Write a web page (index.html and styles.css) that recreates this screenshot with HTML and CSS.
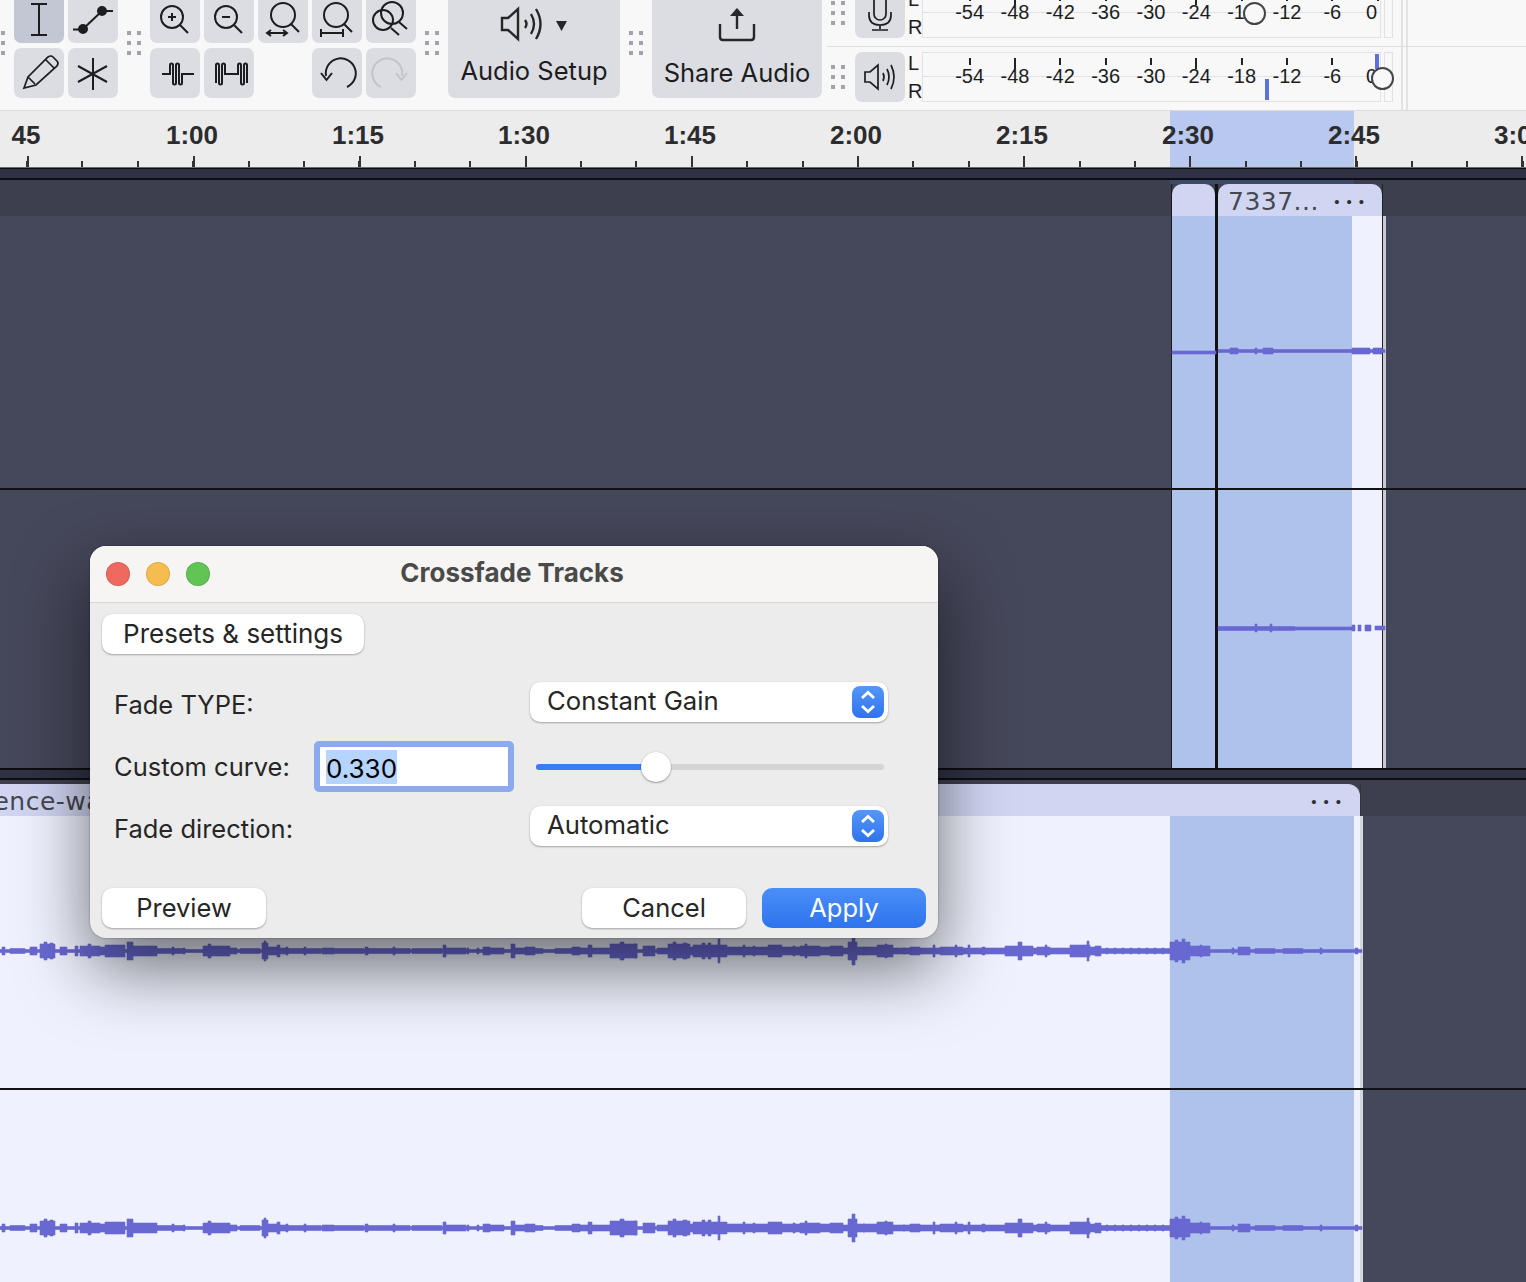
FILE: index.html
```html
<!DOCTYPE html>
<html lang="en">
<head>
<meta charset="utf-8">
<title>Crossfade Tracks</title>
<link rel="stylesheet" href="styles.css">
</head>
<body>
<svg class="defs" width="0" height="0" aria-hidden="true">
  <defs>
    <path id="wave-long" d="M0-1.5H1362V1.5H0ZM10-2.500h15v5h-15zM100-4h5v8h-5zM157-2.500h15v5h-15zM174-2.500h9v5h-9zM230-3h7v6h-7zM240-2.500h20v5h-20zM268-4h9v8h-9zM280-3h6v6h-6zM288-2.500h16v5h-16zM306-2.500h15v5h-15zM322-3h12v6h-12zM334-2.500h30v5h-30zM368-2.500h25v5h-25zM395-2.500h15v5h-15zM412-2.500h30v5h-30zM446-3h20v6h-20zM490-3h12v6h-12zM515-3h10v6h-10zM535-2.500h8v5h-8zM555-2.500h17v5h-17zM580-3h8v6h-8zM592-3h18v6h-18zM690-4h3v8h-3zM740-4h28v8h-28zM782-4h18v8h-18zM820-4h10v8h-10zM843-3h5v6h-5zM857-4h20v8h-20zM893-3h17v6h-17zM928-3h12v6h-12zM963-3h19v6h-19zM985-3h20v6h-20zM1033-3h37v6h-37zM1090-4h5v8h-5zM1101-2.500h69v5h-69zM2-4h3v8h-3zM30-4h7v8h-7zM40-7h15v14h-15zM44-9h3v18h-3zM50-8h3v16h-3zM60-4h7v8h-7zM75-5h3v10h-3zM80-5h20v10h-20zM88-7h3v14h-3zM105-6h20v12h-20zM127-9h6v18h-6zM133-5h24v10h-24zM172-4h2v8h-2zM183-3h2v6h-2zM203-5h27v10h-27zM208-7h3v14h-3zM262-8h6v16h-6zM264-10h2v20h-2zM277-6h3v12h-3zM286-4h2v8h-2zM304-4h2v8h-2zM365-4h3v8h-3zM393-4h2v8h-2zM443-6h3v12h-3zM467-3h2v6h-2zM477-3h2v6h-2zM483-4h7v8h-7zM502-3h2v6h-2zM511-7h4v14h-4zM525-4h10v8h-10zM572-4h8v8h-8zM588-6h4v12h-4zM610-7h27v14h-27zM620-9h4v18h-4zM634-7h3v14h-3zM643-5h12v10h-12zM657-3h11v6h-11zM668-7h22v14h-22zM673-9h3v18h-3zM683-8h4v16h-4zM693-6h34v12h-34zM702-8h3v16h-3zM708-8h3v16h-3zM718-12h2v24h-2zM727-4h13v8h-13zM743-6h2v12h-2zM753-5h2v10h-2zM768-6h14v12h-14zM793-5h2v10h-2zM800-5h20v10h-20zM805-7h2v14h-2zM830-5h13v10h-13zM848-9h9v18h-9zM852-14h3v28h-3zM863-4h2v8h-2zM877-6h16v12h-16zM885-7h2v14h-2zM903-3h2v6h-2zM910-4h10v8h-10zM920-3h8v6h-8zM933-6h2v12h-2zM940-4h23v8h-23zM955-6h2v12h-2zM968-6h2v12h-2zM982-4h3v8h-3zM1005-5h28v10h-28zM1018-9h4v18h-4zM1037-4h13v8h-13zM1045-6h2v12h-2zM1070-6h20v12h-20zM1087-10h2v20h-2zM1095-5h6v10h-6zM1106-3h2v6h-2zM1114-3h2v6h-2zM1122-3h2v6h-2zM1130-3h2v6h-2zM1138-3h2v6h-2zM1146-3h2v6h-2zM1154-3h2v6h-2zM1162-3h2v6h-2zM1170-9h20v18h-20zM1175-11h3v22h-3zM1182-12h3v24h-3zM1190-5h20v10h-20zM1200-6h2v12h-2zM1232-3h2v6h-2zM1238-4h12v8h-12zM1255-2.500h20v5h-20zM1283-2.500h20v5h-20zM1320-3h2v6h-2zM1355-3h3v6h-3z"/>
  </defs>
</svg>
<div class="app">
  <header class="toolbar">
    <span class="grip"></span>
    <div class="tool-grid tool-grid-2">
      <button class="tool active"><svg viewBox="0 0 50 50"><path d="M17 11h16M25 11v31M17 42h16"/></svg></button>
      <button class="tool"><svg viewBox="0 0 50 50"><path d="M15 36L34 18M5 36.500H15M34 18H45"/><circle class="solid" cx="15" cy="36" r="4"/><circle class="solid" cx="34" cy="18" r="4"/></svg></button>
      <button class="tool"><svg class="thin" viewBox="0 0 50 50"><path d="M10 40L14 29L34 9Q37 7 39 9L43 13Q45 15 43 18L22 37ZM14 29L21 36M32 12L40 20"/></svg></button>
      <button class="tool"><svg viewBox="0 0 50 50"><path d="M25 10V42M10 18L39 34M10 34L39 18"/></svg></button>
    </div>
    <span class="grip"></span>
    <div class="tool-grid tool-grid-5">
      <button class="tool"><svg viewBox="0 0 50 50"><circle cx="22" cy="24" r="11"/><path d="M18 24h8M22 20v8M30 32L38 40"/></svg></button>
      <button class="tool"><svg viewBox="0 0 50 50"><circle cx="22" cy="24" r="11"/><path d="M18 24h8M30 32L38 40"/></svg></button>
      <button class="tool"><svg viewBox="0 0 50 50"><circle cx="25" cy="22" r="12"/><path d="M33 31L41 39M9 40H29M13 37L9 40L13 43M25 37L29 40L25 43"/></svg></button>
      <button class="tool"><svg viewBox="0 0 50 50"><circle cx="24" cy="22" r="12"/><path d="M32 31L40 39M9 40H31M9 36V44M31 36V44"/></svg></button>
      <button class="tool"><svg viewBox="0 0 50 50"><circle cx="26" cy="20" r="11"/><circle cx="17" cy="27" r="10"/><path d="M33 29L41 36M25 35L33 42"/></svg></button>
      <button class="tool"><svg viewBox="0 0 50 50"><path d="M12 26H20V17a1.500 1.500 0 0 1 3 0V35a1.500 1.500 0 0 0 3 0V17a1.500 1.500 0 0 1 3 0V35a1.500 1.500 0 0 0 3 0V26H44"/></svg></button>
      <button class="tool"><svg viewBox="0 0 50 50"><path d="M12 35V17a1.500 1.500 0 0 1 3 0V35a1.500 1.500 0 0 0 3 0V17a1.500 1.500 0 0 1 3 0V26H34V17a1.500 1.500 0 0 1 3 0V35a1.500 1.500 0 0 0 3 0V17a1.500 1.500 0 0 1 3 0V35"/></svg></button>
      <span class="tool-gap"></span>
      <button class="tool"><svg viewBox="0 0 50 50"><path d="M14 28A15 15 0 1 1 35 39M9 25L14.500 32L20 25"/></svg></button>
      <button class="tool muted"><svg viewBox="0 0 50 50"><path d="M36 28A15 15 0 1 0 15 39M41 25L35.500 32L30 25"/></svg></button>
    </div>
    <span class="grip"></span>
    <button class="wide-btn audio-btn">
      <svg class="wide-icon" width="68" height="36" viewBox="0 0 68 36"><path d="M2 12H8L18 3V33L8 24H2Z"/><path d="M25 14Q28 18 25 22M31 8Q37 18 31 28M36 3Q45 18 36 33"/><path class="solid" d="M56 15H67L61.500 25Z"/></svg>
      <span class="wide-label">Audio Setup</span>
    </button>
    <span class="grip"></span>
    <button class="wide-btn share-btn">
      <svg class="wide-icon" width="40" height="36" viewBox="0 0 40 36"><path d="M3 18V31Q3 34 6 34H34Q37 34 37 31V18M20 3V23"/><path class="solid" d="M13 10L20 2L27 10Z"/></svg>
      <span class="wide-label">Share Audio</span>
    </button>
    <div class="meters">
      <div class="meter-row meter-row-rec">
        <span class="grip grip-row"></span>
        <button class="tool"><svg class="thin" viewBox="0 0 50 50"><rect x="19" y="5" width="12" height="27" rx="6"/><path d="M14 24V27Q14 37 25 37Q36 37 36 27V24M25 37V41M17 42H33"/></svg></button>
        <div class="channels"><span>L</span><span>R</span></div>
        <div class="meter-box">
          <span class="cell">-54</span><span class="cell major">-48</span><span class="cell">-42</span><span class="cell">-36</span><span class="cell">-30</span><span class="cell major">-24</span><span class="cell">-18</span><span class="cell">-12</span><span class="cell">-6</span><span class="cell cell-end">0</span>
          <span class="knob knob-rec"></span>
        </div>
        <span class="peak"></span>
        <span class="meter-rules"></span>
      </div>
      <div class="meter-row meter-row-play">
        <span class="grip grip-row"></span>
        <button class="tool"><svg class="thin" viewBox="0 0 50 50"><path d="M10 20H15L23 13V37L15 30H10Z"/><path d="M28 21Q30 25 28 29M32 17Q36 25 32 33M36 13Q42 25 36 37"/></svg></button>
        <div class="channels"><span>L</span><span>R</span></div>
        <div class="meter-box">
          <span class="cell">-54</span><span class="cell major">-48</span><span class="cell">-42</span><span class="cell">-36</span><span class="cell">-30</span><span class="cell major">-24</span><span class="cell">-18</span><span class="cell">-12</span><span class="cell">-6</span><span class="cell cell-end">0</span>
          <span class="level level-l"></span>
          <span class="level level-r"></span>
          <span class="knob knob-play"></span>
        </div>
        <span class="peak"></span>
        <span class="meter-rules"></span>
      </div>
    </div>
  </header>

  <div class="ruler">
    <div class="ruler-labels">
      <span>45</span><span>1:00</span><span>1:15</span><span>1:30</span><span>1:45</span><span>2:00</span><span>2:15</span><span>2:30</span><span>2:45</span><span>3:00</span>
    </div>
  </div>
  <div class="track-gap track-gap-top"></div>

  <section class="track track-one">
    <div class="track-band"></div>
    <span class="selection-cap"></span>
    <div class="clip clip-a">
      <div class="clip-head"></div>
      <div class="clip-body"><span class="clip-sel clip-sel-a"></span></div>
    </div>
    <div class="clip clip-b">
      <div class="clip-head"><span class="clip-name">7337...</span><span class="dots">•••</span></div>
      <div class="clip-body"><span class="clip-sel clip-sel-b"></span></div>
    </div>
    <span class="channel-rule rule-one"></span>
    <svg class="wave" width="1526" height="588">
      <path class="wave-fill" d="M1172 171h44v3h-44zM1218 169.500h167v3h-167zM1230 168h8v6h-8zM1255 168h2v6h-2zM1263 168h10v6h-10zM1352 168h18v6h-18zM1373 168h9v6h-9zM1218 446.500h77v4h-77zM1295 447h57v3h-57zM1255 444h2v8h-2zM1270 444h2v8h-2zM1352 445h3v6h-3zM1358 445h3v6h-3zM1365 445h6v6h-6zM1375 446h10v4h-10z"/>
    </svg>
  </section>
  <div class="track-gap"></div>

  <section class="track track-two">
    <div class="track-band"></div>
    <div class="clip clip-long">
      <div class="clip-head"><span class="clip-name">silence-wave</span><span class="dots">•••</span></div>
      <div class="clip-body"><span class="clip-sel clip-sel-long"></span></div>
    </div>
    <span class="channel-rule rule-two"></span>
    <svg class="wave" width="1526" height="502">
      <use class="wave-fill" href="#wave-long" transform="translate(0 171)"/>
      <use class="wave-fill" href="#wave-long" transform="translate(0 448)"/>
    </svg>
  </section>

  <div class="dialog">
    <div class="titlebar">
      <span class="light light-red"></span>
      <span class="light light-yellow"></span>
      <span class="light light-green"></span>
      <span class="title">Crossfade Tracks</span>
    </div>
    <div class="dialog-body">
      <button class="mac-btn presets">Presets &amp; settings</button>
      <div class="form">
        <label class="form-label">Fade TYPE:</label>
        <div class="select"><span>Constant Gain</span><span class="stepper"><svg width="32" height="32" viewBox="0 0 32 32"><path d="M10 12L16 6.500L22 12M10 20L16 25.500L22 20"/></svg></span></div>
        <label class="form-label form-label-mid">Custom curve:</label>
        <div class="text-field"><span class="text-selected">0.330</span></div>
        <div class="slider"><span class="slider-fill" style="width:34%"></span><span class="slider-thumb"></span></div>
        <label class="form-label">Fade direction:</label>
        <div class="select"><span>Automatic</span><span class="stepper"><svg width="32" height="32" viewBox="0 0 32 32"><path d="M10 12L16 6.500L22 12M10 20L16 25.500L22 20"/></svg></span></div>
      </div>
      <div class="dialog-actions">
        <button class="mac-btn action">Preview</button>
        <span class="spacer"></span>
        <button class="mac-btn action">Cancel</button>
        <button class="mac-btn action primary">Apply</button>
      </div>
    </div>
  </div>
</div>
</body>
</html>
```

FILE: styles.css
```css
* { box-sizing: border-box; }
html, body { margin: 0; padding: 0; background: #45475a; }
button { font: inherit; color: inherit; border: 0; padding: 0; margin: 0; }
.defs { position: absolute; }

.app {
  position: relative;
  width: 1526px;
  height: 1282px;
  overflow: hidden;
  display: flex;
  flex-direction: column;
  font-family: Inter, "Liberation Sans", sans-serif;
}

/* toolbar */
.toolbar {
  flex: none;
  height: 111px;
  display: flex;
  align-items: flex-end;
  gap: 9px;
  margin-left: -9px;
  width: 1535px;
  background: #f8f8f8;
  border-bottom: 1px solid #dcdcdc;
  overflow: hidden;
}
.grip {
  flex: none;
  width: 14px;
  height: 24px;
  margin-bottom: 55px;
  background-image:
    linear-gradient(#a3a3b0, #a3a3b0), linear-gradient(#a3a3b0, #a3a3b0),
    linear-gradient(#a3a3b0, #a3a3b0), linear-gradient(#a3a3b0, #a3a3b0),
    linear-gradient(#a3a3b0, #a3a3b0), linear-gradient(#a3a3b0, #a3a3b0);
  background-size: 4px 4px;
  background-repeat: no-repeat;
  background-position: 0 0, 10px 0, 0 10px, 10px 10px, 0 20px, 10px 20px;
}
.grip-row { margin: 0 10px 0 4px; }
.tool-grid {
  flex: none;
  display: grid;
  grid-auto-rows: 50px;
  grid-template-columns: repeat(2, 50px);
  column-gap: 4px;
  row-gap: 5px;
  margin-bottom: 12px;
}
.tool-grid-5 { grid-template-columns: repeat(5, 50px); }
.tool {
  flex: none;
  width: 50px;
  height: 50px;
  border-radius: 7px;
  background: #dcdde2;
  display: block;
}
.tool.active { background: #c3c6d3; }
.tool svg { display: block; width: 50px; height: 50px; fill: none; stroke: #1d1d1f; stroke-width: 2; }
.tool svg.thin { stroke-width: 1.700; }
.tool.muted svg { stroke: #c3c4ca; }
.tool svg .solid { fill: #1d1d1f; }

.wide-btn {
  flex: none;
  height: 98px;
  margin-bottom: 12px;
  border-radius: 0 0 7px 7px;
  background: #dcdde2;
  display: flex;
  flex-direction: column;
  align-items: center;
  padding-top: 6px;
}
.audio-btn { width: 172px; }
.share-btn { width: 170px; }
.wide-icon { display: block; fill: none; stroke: #27272a; stroke-width: 2.400; }
.wide-icon .solid { fill: #27272a; stroke: none; }
.wide-label { font-size: 25.500px; line-height: 32px; margin-top: 13px; color: #1d1d1f; white-space: nowrap; }
.share-btn .wide-label { margin-top: 15px; }

.meters { flex: 1; margin-left: -4px; display: flex; flex-direction: column; min-width: 0; }
.meter-row { display: flex; align-items: center; }
.meter-row-rec { padding-bottom: 8px; border-bottom: 1px solid #dedede; }
.meter-row-play { padding-top: 5px; padding-bottom: 8px; }
.channels {
  flex: none;
  width: 14px;
  height: 50px;
  margin-left: 3px;
  display: flex;
  flex-direction: column;
  justify-content: space-between;
  font: 20px/22px "Liberation Sans", sans-serif;
  color: #1d1d1f;
}
.meter-box {
  position: relative;
  flex: none;
  width: 459px;
  height: 50px;
  padding-left: 24px;
  display: flex;
  border: 1px solid #e2e2e2;
  background: linear-gradient(#e2e2e2, #e2e2e2) 0 23px / 100% 1px no-repeat;
  font: 20px/20px "Liberation Sans", sans-serif;
  color: #1d1d1f;
}
.cell {
  flex: none;
  width: 45.330px;
  padding-top: 13px;
  text-align: center;
  background: linear-gradient(#222, #222) center 5px / 2px 7px no-repeat;
}
.cell.major { background-size: 2px 11px; }
.cell-end { padding-right: 12px; }
.knob {
  position: absolute;
  width: 23px;
  height: 23px;
  border-radius: 50%;
  border: 2px solid #454545;
  background: #f8f8f8;
}
.knob-rec { left: 320px; top: 13px; }
.knob-play { left: 448px; top: 14px; }
.level { position: absolute; background: #5f70dc; width: 4px; }
.level-l { left: 452px; top: 1px; height: 15px; }
.level-r { left: 342px; top: 26px; height: 21px; }
.peak { flex: none; width: 9px; height: 50px; margin-left: 3px; border: 1px solid #e2e2e2; }
.meter-rules {
  flex: none;
  align-self: stretch;
  width: 7px;
  margin: -5px 0 -8px 8px;
  border-left: 2px solid #e2e2e2;
  border-right: 2px solid #e2e2e2;
}
.meter-row-rec .meter-rules { margin-top: 0; }

/* ruler */
.ruler {
  position: relative;
  flex: none;
  height: 57px;
  background:
    repeating-linear-gradient(90deg, #333 0 2px, transparent 2px 166px) 27px bottom / 100% 11px no-repeat,
    repeating-linear-gradient(90deg, #333 0 2px, transparent 2px 55.400px) 26px bottom / 100% 6px no-repeat,
    linear-gradient(#b9c8ee, #b9c8ee) 1170px 0 / 184px 100% no-repeat,
    #ececec;
  border-bottom: 1px solid #6b6b6b;
  overflow: hidden;
}
.ruler-labels {
  position: relative;
  display: flex;
  margin-left: -57px;
  padding-top: 9px;
  font: 700 26px/30px "Liberation Sans", sans-serif;
  color: #2c2c2e;
}
.ruler-labels span { flex: none; width: 166px; text-align: center; }

/* tracks */
.track-gap {
  flex: none;
  height: 12px;
  background: #2f3244;
  border-top: 2px solid #0e0e12;
  border-bottom: 2px solid #0e0e12;
}
.track-gap-top { border-top-width: 1px; }
.track { position: relative; flex: none; background: #45475a; overflow: hidden; }
.track-one { height: 588px; }
.track-two { height: 502px; }
.track-band { height: 36px; background: #3d3f4e; }
.selection-cap { position: absolute; left: 1170px; top: 0; width: 184px; height: 4px; background: #3c4a69; }
.clip {
  position: absolute;
  top: 4px;
  bottom: 0;
  display: flex;
  flex-direction: column;
}
.clip-a { left: 1171px; width: 44px; border-left: 1px solid #1a1a20; }
.clip-b { left: 1215px; width: 168px; border-left: 3px solid #111; border-right: 1px solid #222; }
.clip-long { left: -45px; width: 1406px; border-right: 1px solid #333; }
.clip-head {
  flex: none;
  height: 32px;
  padding: 3px 11px 0 10px;
  display: flex;
  align-items: center;
  justify-content: space-between;
  background: #d0d6f2;
  border-radius: 10px 10px 0 0;
  color: #47474f;
  font: 25px/29px "DejaVu Sans", sans-serif;
  white-space: nowrap;
}
.clip-long .clip-head { border-radius: 0 12px 0 0; padding-right: 12px; }
.clip-name { letter-spacing: .5px; }
.dots { font: 15px/29px "Liberation Sans", sans-serif; letter-spacing: 7px; color: #2f2f36; }
.clip-body { position: relative; flex: 1; background: #eff2fe; }
.clip-sel { position: absolute; top: 0; bottom: 0; background: #afc2ec; }
.clip-sel-a { left: 0; right: 0; }
.clip-sel-b { left: 0; width: 134px; }
.clip-sel-long { left: 1215px; width: 184px; }
.clip-b::after {
  content: "";
  position: absolute;
  left: 165px;
  top: 32px;
  bottom: 0;
  width: 3px;
  background: #c9cad2;
}
.clip-long::after {
  content: "";
  position: absolute;
  left: 1405px;
  top: 32px;
  bottom: 0;
  width: 3px;
  background: #d4d6de;
}
.channel-rule { position: absolute; left: 0; right: 0; height: 2px; background: #121216; }
.rule-one { top: 308px; }
.rule-two { top: 308px; }
.wave { position: absolute; left: 0; top: 0; overflow: visible; filter: blur(.6px); }
.wave-fill { fill: #6968d2; stroke: #6968d2; stroke-width: .6; stroke-linejoin: round; }

/* dialog */
.dialog {
  position: absolute;
  left: 90px;
  top: 546px;
  width: 848px;
  height: 392px;
  border-radius: 16px;
  background: #ececec;
  overflow: hidden;
  box-shadow: 0 30px 70px rgba(0, 0, 0, .55), 0 0 2px rgba(0, 0, 0, .4);
  color: #262626;
  font-size: 25.500px;
}
.titlebar {
  position: relative;
  height: 57px;
  display: flex;
  align-items: center;
  gap: 16px;
  padding: 0 0 1px 16px;
  background: #f6f5f3;
  border-bottom: 1px solid #d6d6d6;
}
.light { flex: none; width: 24px; height: 24px; border-radius: 50%; border: 1px solid rgba(0, 0, 0, .1); }
.light-red { background: #ee6a5f; }
.light-yellow { background: #f5bd4f; }
.light-green { background: #61c555; }
.title {
  flex: 1;
  text-align: center;
  padding: 0 140px 2px 0;
  font-weight: 700;
  font-size: 26px;
  color: #4a4a4a;
  white-space: nowrap;
}
.dialog-body { padding: 11px 12px 0; }
.mac-btn {
  display: block;
  height: 40px;
  border-radius: 10px;
  background: #fff;
  box-shadow: 0 1px 2px rgba(0, 0, 0, .3), 0 0 1px rgba(0, 0, 0, .15);
  color: #262626;
  font-size: 25.500px;
  line-height: 40px;
  text-align: center;
}
.presets { width: 262px; font-size: 26px; line-height: 38px; }
.form {
  display: grid;
  grid-template-columns: 200px 216px 358px;
  grid-template-rows: 59px 65px 40px;
  margin: 28px 0 0 12px;
  align-items: start;
}
.form-label { line-height: 46px; white-space: nowrap; }
.form-label:first-child, .form-label:nth-of-type(3) { grid-column: 1 / 3; }
.form-label-mid { line-height: 52px; }
.select {
  grid-column: 3;
  height: 40px;
  display: flex;
  align-items: center;
  justify-content: space-between;
  padding: 0 4px 0 17px;
  background: #fff;
  border-radius: 10px;
  font-size: 25.700px;
  box-shadow: 0 1px 2px rgba(0, 0, 0, .3), 0 0 1px rgba(0, 0, 0, .15);
}
.select > span:first-child { padding-bottom: 3px; }
.stepper {
  flex: none;
  width: 32px;
  height: 32px;
  border-radius: 8px;
  background: linear-gradient(#5597f8, #2f73ee);
}
.stepper svg { display: block; fill: none; stroke: #fff; stroke-width: 2.800; }
.text-field {
  width: 200px;
  height: 51px;
  padding: 3px 0 0 6px;
  background: #fff;
  border: 6px solid #8caaee;
  border-radius: 5px;
  color: #000;
  font-size: 26px;
  line-height: 37px;
}
.text-selected { display: inline-block; height: 34px; background: #b5d5ff; }
.slider {
  position: relative;
  height: 6px;
  margin: 23px 4px 0 6px;
  border-radius: 3px;
  background: #d4d4d4;
}
.slider-fill { position: absolute; left: 0; top: 0; height: 100%; border-radius: 3px; background: #3a7df2; }
.slider-thumb {
  position: absolute;
  left: 105px;
  top: -12px;
  width: 30px;
  height: 30px;
  border-radius: 50%;
  background: #fff;
  box-shadow: 0 1px 2px rgba(0, 0, 0, .35), 0 0 1px rgba(0, 0, 0, .2);
}
.dialog-actions { display: flex; gap: 16px; margin-top: 42px; }
.spacer { flex: 1; }
.action { width: 164px; flex: none; }
.primary { background: linear-gradient(#4a8ff7, #2f73ee); color: #fff; box-shadow: none; }
```
